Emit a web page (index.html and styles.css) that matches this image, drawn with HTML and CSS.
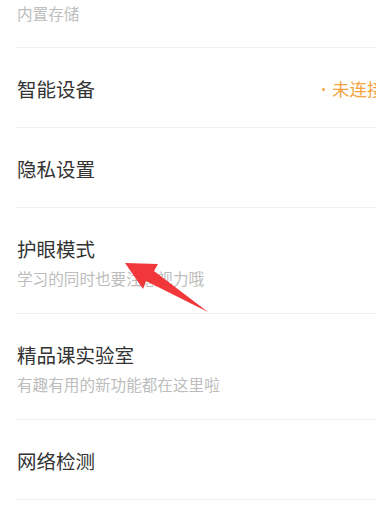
FILE: index.html
```html
<!DOCTYPE html>
<html lang="zh">
<head>
<meta charset="utf-8">
<link rel="stylesheet" href="styles.css">
</head>
<body>
<div class="page">
  <div class="list">
    <div class="row row-partial">
      <div class="sub">内置存储</div>
    </div>
    <div class="row row-single">
      <div class="title">智能设备</div>
      <div class="status"><span class="dot"></span>未连接</div>
    </div>
    <div class="row row-single">
      <div class="title">隐私设置</div>
    </div>
    <div class="row row-double">
      <div class="title">护眼模式</div>
      <div class="sub">学习的同时也要注意视力哦</div>
    </div>
    <div class="row row-double">
      <div class="title">精品课实验室</div>
      <div class="sub">有趣有用的新功能都在这里啦</div>
    </div>
    <div class="row row-single">
      <div class="title">网络检测</div>
    </div>
  </div>
  <svg class="arrow" width="376" height="513" viewBox="0 0 376 513">
    <polygon points="125,263 158,264 154,271 208,312 146,281 143,289" fill="#f2373a"/>
  </svg>
</div>
</body>
</html>
```
FILE: styles.css
```css
html, body {
  margin: 0;
  padding: 0;
  background: #ffffff;
  overflow: hidden;
}
.page {
  position: relative;
  width: 376px;
  height: 513px;
  overflow: hidden;
  font-family: "Noto Sans CJK SC", "Noto Sans", sans-serif;
}
.list {
  display: flex;
  flex-direction: column;
}
.row {
  margin-left: 16px;
  padding-left: 1px;
  border-bottom: 1px solid #f0f0f0;
  box-sizing: border-box;
}
.row-partial {
  height: 48px;
  padding-top: 3px;
}
.row-single {
  height: 80px;
  display: flex;
  align-items: center;
  padding-top: 3px;
}
.row-double {
  height: 106px;
  padding-top: 28px;
}
.title {
  font-size: 19.5px;
  line-height: 26px;
  color: #333333;
  white-space: nowrap;
}
.sub {
  font-size: 15.6px;
  line-height: 20px;
  color: #bdbdbd;
  white-space: nowrap;
}
.row-double .sub {
  margin-top: 6px;
}
.status {
  margin-left: auto;
  width: 54px;
  flex-shrink: 0;
  white-space: nowrap;
  display: flex;
  align-items: center;
  font-size: 17.5px;
  line-height: 22px;
  color: #f4a340;
}
.dot {
  flex-shrink: 0;
  width: 3px;
  height: 3px;
  border-radius: 50%;
  background: #f4a340;
  margin-right: 7px;
}
.arrow {
  position: absolute;
  left: 0;
  top: 0;
  pointer-events: none;
}
```
